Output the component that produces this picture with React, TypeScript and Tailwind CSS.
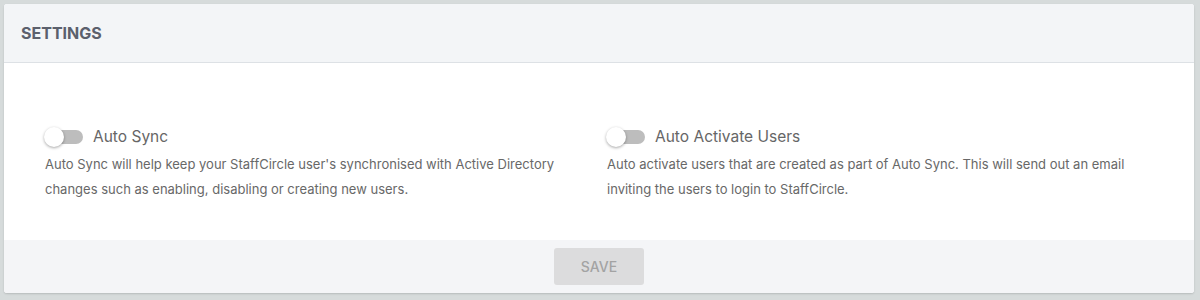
import React from "react";

function Toggle() {
  return (
    <div className="relative w-[40px] h-[20px] flex items-center">
      <div className="ml-[4px] w-[35px] h-[14px] rounded-full bg-[#bdbdbd]" />
      <div className="absolute left-0 top-0 w-[20px] h-[20px] rounded-full bg-white shadow-[0_1px_3px_rgba(0,0,0,0.35)]" />
    </div>
  );
}

function Setting({ title, desc }: { title: string; desc: string }) {
  return (
    <div className="flex flex-col">
      <div className="flex items-center gap-[9px] h-[22px]">
        <Toggle />
        <span className="text-[15.5px] text-[#666666]">{title}</span>
      </div>
      <p className="mt-[4px] pl-[1px] text-[13px] leading-[25px] text-[#686868] pr-[40px]">{desc}</p>
    </div>
  );
}

export default function App() {
  return (
    <div
      className="w-[1200px] h-[300px] bg-[#d6dbdb] pt-[4px] pl-[4px]"
      style={{ fontFamily: 'Inter, "Open Sans", "Liberation Sans", Arial, sans-serif' }}
    >
      <div className="w-[1190px] h-[289px] rounded-[3px] bg-white flex flex-col overflow-hidden shadow-[0_1px_2px_rgba(0,0,0,0.15)]">
        <div className="h-[59px] bg-[#f3f5f7] border-b border-[#dde1e5] flex items-center px-[17px]">
          <span className="text-[16px] font-bold text-[#5b606c]">SETTINGS</span>
        </div>
        <div className="h-[177px] grid grid-cols-[562px_1fr] pl-[40px] pt-[63px]">
          <Setting
            title="Auto Sync"
            desc="Auto Sync will help keep your StaffCircle user's synchronised with Active Directory changes such as enabling, disabling or creating new users."
          />
          <Setting
            title="Auto Activate Users"
            desc="Auto activate users that are created as part of Auto Sync. This will send out an email inviting the users to login to StaffCircle."
          />
        </div>
        <div className="flex-1 bg-[#f4f5f7] flex justify-center pt-[8px]">
          <button className="w-[90px] h-[37px] rounded-[3px] bg-[#dcdcdd] text-[14px] text-[#a3a3a3] font-medium">
            SAVE
          </button>
        </div>
      </div>
    </div>
  );
}
